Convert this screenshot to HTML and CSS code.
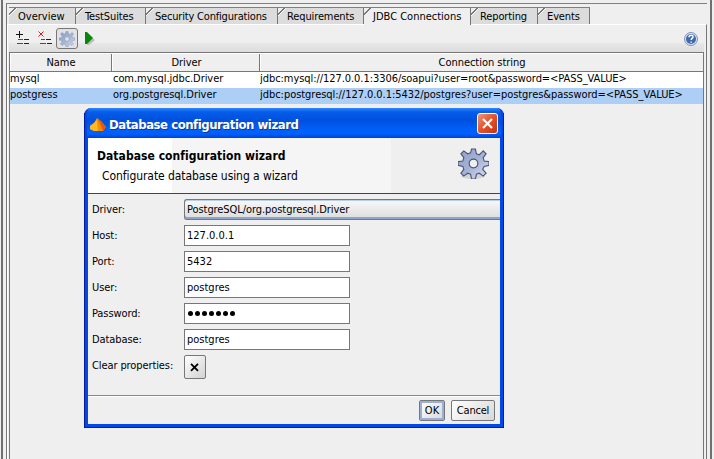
FILE: index.html
```html
<!DOCTYPE html>
<html lang="en">
<head>
<meta charset="utf-8">
<title>JDBC Connections</title>
<link rel="stylesheet" href="styles.css">
</head>
<body>
<svg width="0" height="0" class="defs"><defs>
<linearGradient id="steel" x1="0" y1="0" x2="1" y2="1"><stop offset="0" stop-color="#8fa0c8"/><stop offset=".5" stop-color="#a4b3d3"/><stop offset="1" stop-color="#dedff3"/></linearGradient>
<symbol id="gear" viewBox="0 0 32 32"><path fill-rule="evenodd" d="M14 1h4l1 5 3 1 3-3 1-1 3 3-3 4 1 3.500 5 .5v4l-5 1-1.500 3 3.500 4-3 3-4-3-3 1-1 5h-4l-1-5-3-1-4 3-3-3 3-4-1-3-5-1v-4l5-.5 1-3.500-3-4 3-3 4 3 3-1zM16 11.500a4.500 4.500 0 1 0 0 9a4.500 4.500 0 0 0 0-9z"/></symbol>
</defs></svg>
<div class="frame">
<div class="panel">
  <nav class="tabs">
    <div class="tab t1"><span>Overview</span></div><div class="tab t2"><span>TestSuites</span></div><div class="tab t3"><span>Security Configurations</span></div><div class="tab t4"><span>Requirements</span></div><div class="tab t5 active"><span>JDBC Connections</span></div><div class="tab t6"><span>Reporting</span></div><div class="tab t7"><span>Events</span></div>
  </nav>
  <div class="content">
    <div class="toolbar">
      <svg class="tool" width="15" height="14" shape-rendering="crispEdges"><path d="M0 3.500h7M3.500 0v7" stroke="#111" fill="none"/><path d="M2 8.500h5M1 12.500h6" stroke="#078007"/><path d="M8 8.500h5M8 12.500h5" stroke="#0808d8"/></svg>
      <svg class="tool" width="15" height="14"><path d="M.5.5l5 5M5.500.5l-5 5" stroke="#e01818" fill="none"/><path d="M3 8.500h4M2 12.500h6" stroke="#078007"/><path d="M8 8.500h5M9 12.500h5" stroke="#0808d8"/></svg>
      <span class="toggle"><svg width="16" height="16" fill="url(#steel)" stroke="#8292b8" stroke-width="1"><use href="#gear"/></svg></span>
      <svg class="run" width="10" height="14"><path d="M2 2l8 6-6 5H2z" fill="#bbb"/><path d="M0 0h2l6 6-6 6H0z" fill="#078607"/></svg>
      <svg class="help" width="14" height="14"><circle cx="7" cy="7" r="6.500" fill="#d9e2f0" stroke="#7e93b8"/><circle cx="7" cy="7" r="5" fill="#3f68ad"/><path d="M5 5.300c.1-3 4.500-2.500 4-.2-.3 1.100-1.800 1.300-1.800 3M7.200 9.500v1.300" stroke="#fff" stroke-width="1.500" fill="none"/></svg>
    </div>
    <div class="table">
      <div class="row head"><div><span>Name</span></div><div><span>Driver</span></div><div><span>Connection string</span></div></div>
      <div class="row"><div>mysql</div><div>com.mysql.jdbc.Driver</div><div class="url1">jdbc:mysql://127.0.0.1:3306/soapui?user=root&amp;password=&lt;PASS_VALUE&gt;</div></div>
      <div class="row selected"><div>postgress</div><div>org.postgresql.Driver</div><div class="url2">jdbc:postgresql://127.0.0.1:5432/postgres?user=postgres&amp;password=&lt;PASS_VALUE&gt;</div></div>
    </div>
  </div>
</div>
</div>
<section class="dialog">
  <header class="titlebar">
    <svg width="16" height="15"><path d="M0 9l4-3 3-5 4 3 5 6-3 4H4L0 12z" fill="#f58a0b"/><path d="M0 9l4-3 3-3 1 11H4L0 12z" fill="#ffba20"/><path d="M7 1l4 3 5 6-3 4-3-8z" fill="#e65c04"/></svg>
    <h1>Database configuration wizard</h1>
    <span class="close"><svg width="19" height="19"><path d="M5 5l9 9M14 5l-9 9" stroke="#fff" stroke-width="2.200"/></svg></span>
  </header>
  <div class="body">
    <div class="banner">
      <div><h2>Database configuration wizard</h2><p>Configurate database using a wizard</p></div>
      <svg class="gear" width="34" height="34"><ellipse cx="17" cy="29" rx="12" ry="3" fill="#d4d4d4"/><use href="#gear" x="2" y="1" width="31" height="31" fill="url(#steel)" stroke="#4c5778" stroke-width="1.200"/></svg>
    </div>
    <div class="form">
      <label>Driver:</label><div class="combo">PostgreSQL/org.postgresql.Driver</div>
      <label>Host:</label><div class="field">127.0.0.1</div>
      <label>Port:</label><div class="field">5432</div>
      <label>User:</label><div class="field">postgres</div>
      <label>Password:</label><div class="field dots"><i></i><i></i><i></i><i></i><i></i><i></i><i></i></div>
      <label>Database:</label><div class="field">postgres</div>
      <label>Clear properties:</label><div class="clear"><svg width="10" height="9"><path d="M1 .8l7 7M8 .8l-7 7" stroke="#000" stroke-width="1.800"/></svg></div>
    </div>
    <footer><div class="btn ok"><span>OK</span></div><div class="btn cancel"><span>Cancel</span></div></footer>
  </div>
</section>
</body>
</html>
```

FILE: styles.css
```css
*{box-sizing:border-box}
body{margin:0;width:714px;height:459px;overflow:hidden;background:#efefef;color:#000;font:11px/16px "DejaVu Sans Condensed","DejaVu Sans",sans-serif;font-stretch:condensed;white-space:nowrap}
.defs{position:absolute}
h1,h2,p{margin:0}
svg{display:block;flex:none}
.frame{height:459px;margin:0 2px 0 1px;border-left:2px solid #707070;border-right:2px solid #707070;padding:3px 3px 0;background:#efefef}
.panel{height:456px;border-left:1px solid #777;border-top:1px solid #808080;background:#efefef}
.tabs{display:flex;height:20px;padding:3px 0 0 2px}
.tab{height:17px;border-top:1px solid #808080;border-right:1px solid #777;background:linear-gradient(135deg,#efefef 4px,#777 4px,#777 5px,#fff 5px,#fff 6px,#dcdcdc 6px);padding-left:9px;line-height:17px}
.tab.active{height:18px;background:linear-gradient(135deg,#efefef 4px,#777 4px,#777 5px,#efefef 5px)}
.t1{width:67px}.t2{width:70px}.t3{width:132px}.t4{width:86px}.t5{width:107px}.t6{width:67px}.t7{width:52px}
.t3{letter-spacing:-.19px}
.t2,.t4,.t6,.t7{letter-spacing:-.12px}
.content{height:435px;border-top:1px solid #fff;border-left:1px solid #fff;border-right:1px solid #777;padding:0 2px 0 1px}
.toolbar{height:27px;display:flex;align-items:center;padding:0 5px 0 7px;background:linear-gradient(#efefef 0,#efefef 17px,#e6e6e6 19px,#dedede 26px)}
.tool{margin-right:7px;position:relative;top:-1px}
.tool+.tool{margin-right:3px}
.toggle{width:22px;height:21px;border:1px solid #777;border-radius:3px;background:#e2e2e2;display:grid;place-items:center}
.run{margin-left:7px}
.help{margin-left:auto;margin-right:1px}
.table{height:407px;border:1px solid #777;border-bottom:0}
.row{display:grid;grid-template-columns:102px 148px 1fr;height:16px;background:#fff;line-height:14px}
.row>div{overflow:hidden;letter-spacing:-.04px}
.row>div:nth-child(3){padding-left:0}
.row>.url1{letter-spacing:-.06px}
.row>div:nth-child(2){padding-left:1px;letter-spacing:-.06px}
.head{height:19px;background:#efefef;border-bottom:1px solid #777;line-height:18px;text-align:center;border-top:1px solid #fff}
.head>div{border-right:1px solid #777;border-left:1px solid #fff}
.head>div:last-child{border-right:0}
.selected{background:#adcff6}
.dialog{position:absolute;left:84px;top:108px;width:420px;height:320px;border:4px solid #0048e8;border-top:0;border-left-color:#0846dc;border-radius:7px 7px 0 0;background:#0054e6;box-shadow:inset 0 1px #3c92ff}
.dialog::after{content:"";position:absolute;inset:5px -4px -4px;border:1px solid #001ca0;border-top:0;pointer-events:none}
.titlebar{height:30px;display:flex;align-items:center;padding:3px 3px 0;margin:0 -1px;border-radius:5px 5px 0 0;background:linear-gradient(#2d88ff 0,#055de9 4px,#0050dd 12px,#0060fb 22px,#0060ff 26px,#0041cf 30px)}
.titlebar h1{font-size:13px;line-height:20px;color:#fff;text-shadow:1px 1px #123a91;margin-left:3px;letter-spacing:-.46px}
.close{width:21px;height:21px;margin-left:auto;position:relative;top:-1px;border:1px solid #fff;border-radius:3px;background:linear-gradient(135deg,#ec967d,#e3512b 50%,#c43512);display:grid;place-items:center}
.body{height:286px;background:#efefef;display:flex;flex-direction:column}
.banner{height:56px;background:linear-gradient(90deg,#fff 84px,#f5f5f5 84px,#f5f5f5 303px,#efefef 303px);border-bottom:1px solid #444;display:flex;padding:8px 10px 0 9px}
.banner h2{font-size:12px;line-height:20px;letter-spacing:.05px}
.banner p{font-size:12px;line-height:20px;padding-left:5px;letter-spacing:-.07px}
.gear{margin-left:auto;margin-top:1px}
.form{display:grid;grid-template-columns:92px 1fr;grid-auto-rows:26px;padding:5px 0 0 4px;height:201px}
.form label{line-height:22px;letter-spacing:-.1px}
.field{height:21px;width:166px;border:1px solid #777;background:#fff;padding-left:2px;line-height:20px}
.combo{height:21px;border:1px solid #777;border-right:0;border-radius:3px 0 0 3px;box-shadow:inset 0 1px #b8cfe5,inset 0 -2px #8ca5cb;background:linear-gradient(#f8f8f8,#dcdcdc);padding-left:2px;line-height:20px;letter-spacing:-.07px}
.dots{display:flex;align-items:center;gap:2px;padding-left:3px}
.dots i{width:5px;height:5px;border-radius:50%;background:#000}
.clear{height:24px;width:22px;border:1px solid #777;border-radius:2px;background:linear-gradient(135deg,#fff,#d2d2d2);display:grid;place-items:center}
footer{flex:1;border-top:1px solid #888;box-shadow:inset 0 1px #fff;display:flex;justify-content:flex-end;gap:6px;padding:4px 5px 0 0}
.btn{height:21px;border:1px solid #777;border-radius:2px;background:linear-gradient(135deg,#fff,#d8d8d8);text-align:center;line-height:19px}
.ok{width:26px;box-shadow:inset 0 0 0 2px #9bb0d4}
.cancel{width:44px;letter-spacing:-.2px}
```
